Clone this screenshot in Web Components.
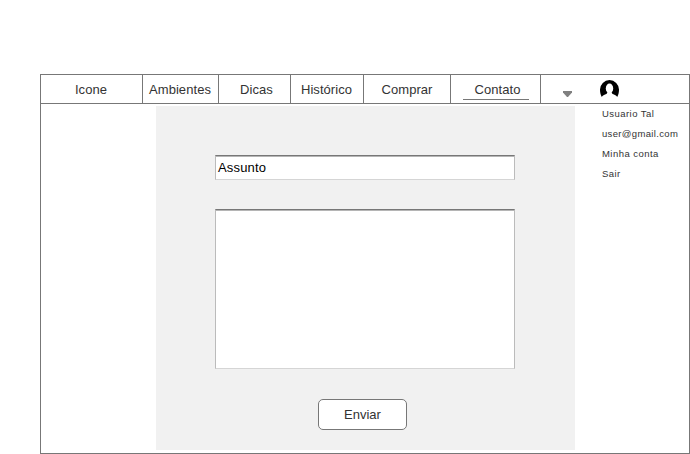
<!DOCTYPE html>
<html lang="pt">
<head>
<meta charset="utf-8">
<title>Contato</title>
<style>
html, body { margin: 0; height: 454px; overflow: hidden; background: #fff; }
body { font: 13px/15px "Liberation Sans", Arial, sans-serif; color: #333; }
</style>
</head>
<body>
<app-window>
  <nav-bar slot="nav">
    <nav-item style="--w:101px; --shift:-1px">Icone</nav-item>
    <nav-item style="--w:75px; --shift:-1px">Ambientes</nav-item>
    <nav-item style="--w:71px; --shift:4px">Dicas</nav-item>
    <nav-item style="--w:72px; --shift:-1px">Histórico</nav-item>
    <nav-item style="--w:86px">Comprar</nav-item>
    <nav-item active style="--w:89px">Contato</nav-item>
    <account-icons slot="account"></account-icons>
  </nav-bar>
  <contact-form></contact-form>
  <user-menu slot="side">
    <menu-entry style="--ls:.45px">Usuario Tal</menu-entry>
    <menu-entry style="--ls:.34px">user@gmail.com</menu-entry>
    <menu-entry style="--ls:.45px">Minha conta</menu-entry>
    <menu-entry style="--ls:.4px">Sair</menu-entry>
  </user-menu>
</app-window>
<script>
function define(name, html) {
  const template = document.createElement('template');
  template.innerHTML = html;
  customElements.define(name, class extends HTMLElement {
    constructor() {
      super();
      this.attachShadow({ mode: 'open' }).append(template.content.cloneNode(true));
    }
  });
}

define('app-window', `
<style>
:host { display: flex; flex-direction: column; box-sizing: border-box; height: 380px; width: 650px; margin: 74px 0 0 40px; border: 1px solid #777; }
main { display: grid; grid-template-columns: 115px 419px 1fr; padding-top: 2px; }
.form { grid-column: 2; }
</style>
<slot name="nav"></slot>
<main><div class="form"><slot></slot></div><slot name="side"></slot></main>`);

define('nav-bar', `
<style>
:host { display: flex; height: 28px; border-bottom: 1px solid #777; }
</style>
<slot></slot><slot name="account"></slot>`);

define('nav-item', `
<style>
:host { display: flex; justify-content: center; width: var(--w); border-right: 1px solid #777; }
span { box-sizing: border-box; height: 25px; padding-top: 7px; margin-left: var(--shift, 0); white-space: nowrap; text-align: center; letter-spacing: .06px; }
:host([active]) span { width: 66px; padding-left: 3px; margin-left: 1px; border-bottom: 1px solid #777; }
</style>
<span><slot></slot></span>`);

define('account-icons', `
<style>
:host { display: flex; align-items: flex-start; }
.arrow { margin: 16px 0 0 22px; }
.avatar { margin: 5px 0 0 28px; }
svg { display: block; }
</style>
<svg class="arrow" width="9" height="6" viewBox="0 0 9 6"><path d="M0 0H9V1.5L5 6H4L0 1.5Z" fill="#808080"/></svg>
<svg class="avatar" width="19" height="18" viewBox="0 0 19 18">
  <path d="M1.8 17C.5 15 0 12.5 0 9.6A9.5 9.5 0 0 1 19 9.6C19 12.5 18.5 15 17.2 17C16.5 15.6 15 14.6 12 13.8H7C4 14.6 2.5 15.6 1.8 17Z" fill="#000"/>
  <ellipse cx="9.5" cy="8.4" rx="3.7" ry="4.9" fill="#fff"/>
  <path d="M7.5 12H11.5L12.5 14.2H6.5Z" fill="#fff"/>
</svg>`);

define('contact-form', `
<style>
:host { display: flex; flex-direction: column; align-items: flex-start; box-sizing: border-box; height: 344px; padding: 49px 0 0 59px; background: #f1f1f1; }
</style>
<text-box style="--h:25px">Assunto</text-box>
<text-box style="--h:160px; margin-top:29px"></text-box>
<push-button>Enviar</push-button>`);

define('text-box', `
<style>
:host { display: block; box-sizing: border-box; width: 300px; height: var(--h); padding: 4px 2px; color: #000; letter-spacing: .17px; background: #fff; border: 1px solid #bbb; border-top-color: #777; border-bottom-color: #d5d5d5; box-shadow: inset 0 1px #b5b5b5; }
</style>
<slot></slot>`);

define('push-button', `
<style>
:host { display: flex; align-items: center; justify-content: center; box-sizing: border-box; width: 89px; height: 31px; margin: 30px 0 0 103px; background: #fff; border: 1px solid #777; border-radius: 5px; }
</style>
<slot></slot>`);

define('user-menu', `
<style>
:host { display: flex; flex-direction: column; padding-left: 27px; font-size: 9.5px; line-height: 20px; margin-top: -2px; height: 80px; }
</style>
<slot></slot>`);

define('menu-entry', `
<style>
:host { display: block; height: 20px; white-space: nowrap; letter-spacing: var(--ls); }
</style>
<slot></slot>`);
</script>
</body>
</html>
